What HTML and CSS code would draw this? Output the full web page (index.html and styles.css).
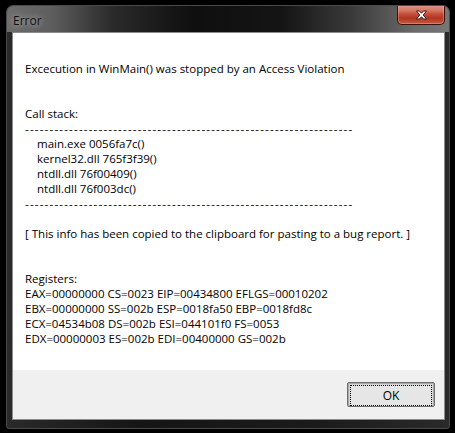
FILE: index.html
```html
<!DOCTYPE html>
<html lang="en">
<head>
    <meta charset="UTF-8">
    <title>Error</title>
    <link rel="stylesheet" href="styles.css">
</head>
<body>
    <div class="window">
        <div class="titlebar">
            <span class="title">Error</span>
            <button class="close" type="button">
                <svg width="13" height="10" viewBox="0 0 13 10">
                    <path d="M1.5 1 L4.5 1 L6.5 3.2 L8.5 1 L11.5 1 L8.2 5 L11.5 9 L8.5 9 L6.5 6.8 L4.5 9 L1.5 9 L4.8 5 Z" fill="#fff" stroke="#3a1a14" stroke-width="1" stroke-linejoin="round"/>
                </svg>
            </button>
        </div>
        <div class="client">
            <div class="content">
                <p class="line">Excecution in WinMain() was stopped by an Access Violation</p>
                <p class="line gap2">Call stack:</p>
                <p class="line dashes">-------------------------------------------------------------------</p>
                <p class="line indent">main.exe 0056fa7c()</p>
                <p class="line indent">kernel32.dll 765f3f39()</p>
                <p class="line indent">ntdll.dll 76f00409()</p>
                <p class="line indent">ntdll.dll 76f003dc()</p>
                <p class="line dashes">-------------------------------------------------------------------</p>
                <p class="line gap1">[ This info has been copied to the clipboard for pasting to a bug report. ]</p>
                <p class="line gap2">Registers:</p>
                <p class="line">EAX=00000000 CS=0023 EIP=00434800 EFLGS=00010202</p>
                <p class="line">EBX=00000000 SS=002b ESP=0018fa50 EBP=0018fd8c</p>
                <p class="line">ECX=04534b08 DS=002b ESI=044101f0 FS=0053</p>
                <p class="line">EDX=00000003 ES=002b EDI=00400000 GS=002b</p>
            </div>
            <div class="footer">
                <button class="ok" type="button"><span>OK</span></button>
            </div>
        </div>
    </div>
</body>
</html>
```

FILE: styles.css
```css
body {
    margin: 0;
    padding: 0;
    background: #000;
    font-family: "Open Sans", "Noto Sans", sans-serif;
    font-size: 11.5px;
    color: #000;
}
.window {
    margin: 5px 0 0 6px;
    width: 444px;
    height: 424px;
    border: 1px solid #4a4a4a;
    border-radius: 7px 7px 3px 3px;
    box-sizing: border-box;
    background: linear-gradient(90deg, #2a2a2a 0%, #151515 30%, #1b1b1b 70%, #2a2a2a 100%);
    display: flex;
    flex-direction: column;
    overflow: hidden;
}
.titlebar {
    height: 26px;
    display: flex;
    align-items: flex-start;
    background: linear-gradient(90deg, #6c6c6c 0%, #5e5e5e 10%, #2a2a2a 24%, #0f0f0f 42%, #141414 62%, #3a3a3a 78%, #6a6a6a 92%, #777 100%);
}
.title {
    margin: 6px 0 0 6px;
    font-size: 12px;
    color: #111;
    text-shadow: 0 0 6px rgba(255, 255, 255, 0.5), 0 0 10px rgba(255, 255, 255, 0.4);
}
.close {
    margin: -1px 4px 0 auto;
    width: 48px;
    height: 20px;
    padding: 0;
    border: 1px solid #3b1208;
    border-top: none;
    border-radius: 0 0 5px 5px;
    background: linear-gradient(#d99a8c 0%, #d27460 30%, #c24a33 50%, #b33522 70%, #c75a3e 100%);
    box-shadow: inset 0 0 0 1px rgba(255, 200, 180, 0.35);
    display: flex;
    align-items: center;
    justify-content: center;
}
.close svg {
    display: block;
    margin-top: 1px;
}
.client {
    margin: 0 4px 8px 5px;
    flex: 1;
    border: 1px solid #8c8c8c;
    background: #fff;
    display: flex;
    flex-direction: column;
}
.content {
    flex: 1;
    padding: 28px 0 0 12px;
}
.line {
    margin: 0;
    height: 15px;
    line-height: 15px;
    white-space: nowrap;
}
.gap1 {
    margin-top: 15px;
}
.gap2 {
    margin-top: 30px;
}
.indent {
    padding-left: 12px;
}
.dashes {
    letter-spacing: 1.2px;
}
.footer {
    height: 49px;
    background: #f0f0f0;
    display: flex;
    justify-content: flex-end;
    align-items: flex-start;
}
.ok {
    margin: 12px 9px 0 0;
    width: 88px;
    height: 25px;
    padding: 2px;
    border: 1px solid #6f6f6f;
    border-radius: 2px;
    background: #d8d8d8;
    box-shadow: inset 0 0 0 1px #a8a8a8;
    font-family: inherit;
    font-size: 12px;
    color: #000;
}
.ok span {
    display: flex;
    align-items: center;
    justify-content: center;
    height: 100%;
    border: 1px dotted #000;
    background: #e6e6e6;
}
```
